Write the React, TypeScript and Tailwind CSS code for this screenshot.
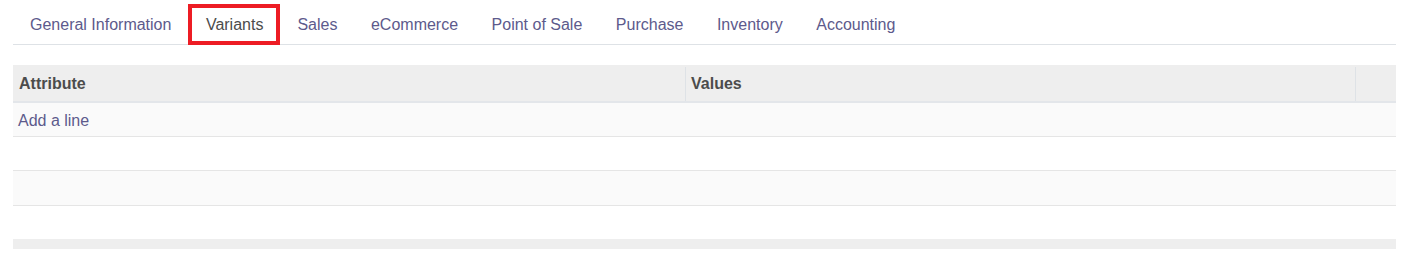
const tabs = ['General Information', 'Variants', 'Sales', 'eCommerce', 'Point of Sale', 'Purchase', 'Inventory', 'Accounting'];

export default function App() {
  return (
    <div className="min-h-[258px] bg-white pl-[13px] pr-[8px] font-['Liberation_Sans',Arial,sans-serif] text-[16px]">
      <nav className="flex h-[45px] items-end border-b border-[#dee2e6]">
        {tabs.map((t) => (
          <div
            key={t}
            className={
              t === 'Variants'
                ? '-mb-px flex h-[41px] items-center border-4 border-[#ed1c24] pl-[14px] pr-[13px] text-[#4c4c4c]'
                : '-mb-px flex h-[41px] items-center border-4 border-transparent pl-[13px] pr-[12.5px] text-[#5d5a8c]'
            }
          >
            {t}
          </div>
        ))}
      </nav>

      <div className="mt-[20px]">
        <div className="flex h-[38px] border-b-2 border-[#e3e6ea] bg-[#eeeeee] pt-[2px] font-bold text-[#4c4c4c]">
          <div className="flex w-[673px] items-center border-r border-[#dee2e6] pl-[6px]">Attribute</div>
          <div className="flex flex-1 items-center border-r border-[#dee2e6] pl-[5px]">Values</div>
          <div className="w-[40px]" />
        </div>
        <div className="flex h-[34px] items-center border-b border-[#e5e5e5] bg-[#fafafa] pl-[5px] pt-[2px] text-[#5d5a8c]">
          Add a line
        </div>
        <div className="h-[34px] border-b border-[#e5e5e5] bg-white" />
        <div className="h-[35px] border-b border-[#e5e5e5] bg-[#fafafa]" />
        <div className="h-[33px] bg-white" />
        <div className="h-[10px] bg-[#eeeeee]" />
      </div>
    </div>
  );
}
